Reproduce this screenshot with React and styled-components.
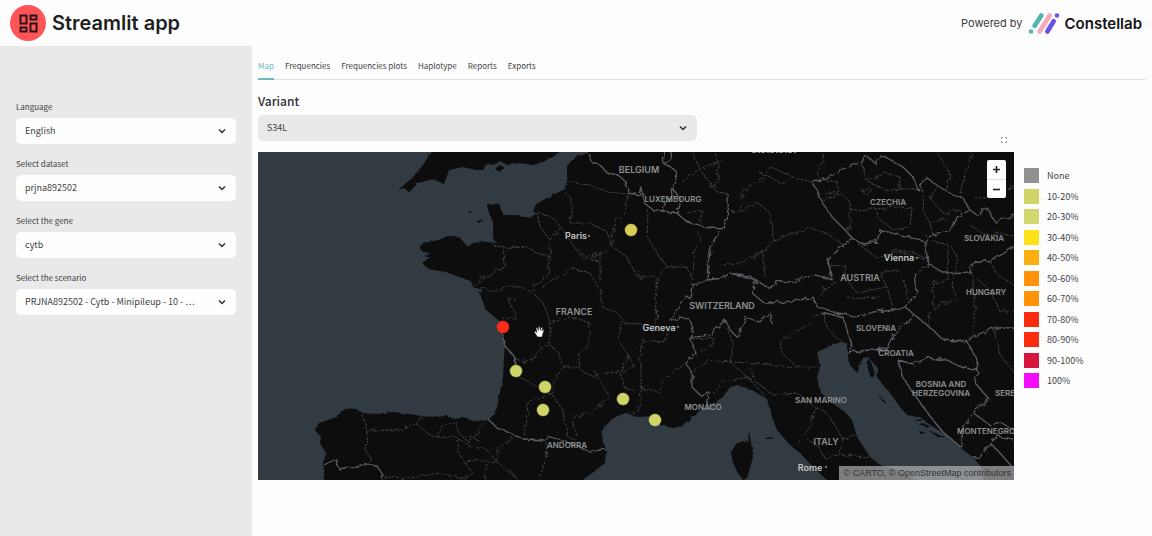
import React from "react";
import styled, { createGlobalStyle } from "styled-components";

const sidebarFields = [
  { id: "language", label: "Language", value: "English" },
  { id: "dataset", label: "Select dataset", value: "prjna892502" },
  { id: "gene", label: "Select the gene", value: "cytb" },
  {
    id: "scenario",
    label: "Select the scenario",
    value: "PRJNA892502 - Cytb - Minipileup - 10 - …",
  },
];

const tabs = [
  "Map",
  "Frequencies",
  "Frequencies plots",
  "Haplotype",
  "Reports",
  "Exports",
];

const legend = [
  { label: "None", color: "#8f918f" },
  { label: "10-20%", color: "#ced467" },
  { label: "20-30%", color: "#d0d970" },
  { label: "30-40%", color: "#ffe11a" },
  { label: "40-50%", color: "#fcb010" },
  { label: "50-60%", color: "#ff9208" },
  { label: "60-70%", color: "#ff9208" },
  { label: "70-80%", color: "#fa2c10" },
  { label: "80-90%", color: "#fa2c10" },
  { label: "90-100%", color: "#d6163f" },
  { label: "100%", color: "#f20cfb" },
];

const samples = [
  { x: 631, y: 230, color: "#d8cf55" },
  { x: 503, y: 327, color: "#fa2c1a" },
  { x: 516, y: 371, color: "#ced467" },
  { x: 545, y: 387, color: "#ced467" },
  { x: 543, y: 410, color: "#ced467" },
  { x: 623, y: 399, color: "#ced467" },
  { x: 655, y: 420, color: "#ced467" },
];

const land = [
  // continent, from the Belgian coast round to Lazio
  "M590 150 L588 153 573 158 567 167 567 182 563 190 547 198 535 205 533 212 537 213 530 218 517 215 503 215 499 204 487 205 489 213 493 222 493 238 497 243 486 242 473 243 468 247 459 237 448 236 439 240 423 243 419 248 423 252 431 253 424 256 430 258 422 263 429 269 446 272 459 277 471 281 473 287 483 290 480 293 484 307 486 310 501 322 499 331 505 343 503 377 496 413 488 420 473 421 463 417 456 419 446 416 426 417 409 414 393 412 376 414 363 413 356 409 344 408 337 417 319 423 315 430 321 437 320 443 326 453 323 463 325 482 L580 482 605 463 606 450 602 437 603 428 613 418 625 413 638 417 653 416 660 425 673 428 683 426 693 415 710 405 723 397 730 387 738 385 752 390 767 399 772 417 777 430 790 445 800 453 813 467 829 482 1016 482 1016 150Z",
  // southern England and the Isle of Wight
  "M433 150 L423 165 413 177 403 186 398 190 404 188 409 192 418 183 433 179 444 184 449 170 463 167 476 170 483 170 486 165 496 164 499 161 509 165 520 163 533 165 543 162 553 157 562 150Z",
  "M495 169 L500 165 505 168 500 172Z",
  // Channel islands
  "M477 221 L482 220 484 222 479 223Z M468 211 L471 211 471 213Z",
  // Corsica and Elba
  "M749 432 L748 440 737 443 731 452 733 463 738 473 743 480 747 478 753 457 751 442Z",
  "M765 438 L773 437 772 439 766 439Z",
];

const adriatic =
  "M817 352 L828 347 840 342 847 343 847 352 850 365 857 373 863 358 868 357 877 367 877 377 888 390 900 407 907 415 920 417 933 427 947 435 962 449 973 457 981 467 984 482 920 482 895 469 880 465 870 457 857 437 852 420 845 412 832 403 820 392 817 377 820 367Z";

const dalmatia =
  "M866 363 L871 378 874 376 873 366 869 359Z M873 371 L885 385 892 391 886 389Z M879 395 L885 402 883 402Z M914 420 L924 419 922 422Z M917 425 L927 424 930 427Z M919 431 L926 433 921 434Z M928 430 L945 437 938 437Z";

const countryBorders = [
  "M588 153 L592 163 600 165 607 173 618 175 627 183 628 193 640 195 642 188 644 203 653 210 663 211 677 213 687 222 703 227 722 229",
  "M665 150 L663 163 675 170 677 180 672 188 673 197 665 203 663 211 M672 188 L681 200 678 213",
  "M670 150 L672 159 664 164",
  "M727 193 L727 202 728 217 722 229 712 243 708 263 707 280",
  "M707 280 L693 285 692 293 680 303 673 317 671 322 680 317 690 320 693 328 690 338 696 353 686 363 692 373 692 387 700 395 710 393 707 405",
  "M707 280 L723 278 730 273 743 277 755 280 752 293 763 302",
  "M730 273 L741 275 750 276 758 284",
  "M690 338 L710 335 725 320 730 330 738 338 747 318 757 322 770 313 772 324",
  "M756 280 L768 288 777 280 790 283 815 275 832 280 828 260 843 245 852 238 847 232 832 217 822 202 813 182 822 180 840 170 862 162 865 155 875 163 880 156 887 158 903 167 913 177 918 190 927 178 947 192 963 198 970 210 957 217 952 230 928 237 925 242 900 235 880 230 877 242 863 244 852 238",
  "M970 210 L977 215 987 208 995 222 1015 215",
  "M925 242 L928 263 943 273 970 272 973 263 993 260 1014 247",
  "M928 263 L915 275 917 293 905 307 897 310 873 312 860 317 833 312 817 307 813 297 790 302 767 303 760 300",
  "M905 307 L917 317 933 330 943 340 967 342 972 337 993 328 1014 328",
  "M820 312 L843 317 847 333 853 348 848 352 870 350 888 349 895 333 913 315",
  "M898 360 L903 377 913 393 933 420 943 432 962 448 962 430 973 413 988 398 975 383 978 370 960 367 947 360 927 358 913 364 898 360",
  "M967 342 L977 360 978 370 M973 413 L990 425 1000 422 1014 430",
  "M973 457 L980 457 990 443 1000 453 1012 467 M990 443 L998 436 1014 440",
  "M489 420 L496 427 510 433 523 439 545 440 547 436 570 443 590 452 605 449",
  "M324 465 L336 459 339 469 363 465 376 465 383 475 382 480",
  "M500 326 L505 346 514 356 516 368",
];

const regionBorders = [
  "M568 182 L590 185 607 192 628 194 627 210 617 220 612 233 612 247",
  "M565 192 L572 200 570 223 590 223 607 232 612 247 600 253 587 257 575 248 563 230 553 218 537 213 540 227 550 240 560 228",
  "M648 210 L647 237 657 253 667 267 657 277 637 277 627 257 613 247 M637 270 L640 279",
  "M667 267 L687 267 693 280 M697 230 L700 240 695 250 693 273 M687 213 L702 210 700 227",
  "M510 248 L527 247 537 253 550 257 548 273 533 288 M550 240 L550 257",
  "M516 286 L532 292 547 285 573 268 590 273 600 290 602 307 617 313 623 320 618 340 628 355 622 372",
  "M600 253 L600 283 M575 248 L583 258 600 260 M657 277 L655 300 657 320",
  "M532 292 L543 303 550 323 M628 355 L634 365 622 373",
  "M493 245 L504 247 505 267 483 278 474 285 M504 247 L516 247 527 247",
  "M480 288 L496 292 506 286 516 286 M508 298 L516 317 502 320 M516 300 L508 298",
  "M510 353 L523 363 533 358 550 342 550 323 570 317 590 323 588 347 578 353 580 370 593 377 600 373",
  "M550 345 L558 352 563 367 553 383 552 393 527 402 528 417 523 435 M563 367 L578 367",
  "M517 375 L537 387 552 395 563 410 568 437 575 440",
  "M593 370 L602 383 610 398 590 413 572 418 577 437 M602 373 L620 372 625 388 638 390",
  "M672 327 L663 342 643 340 640 360 642 387 638 410 630 413 M657 310 L655 325 623 323",
  "M642 388 L660 392 662 380 673 373 686 363",
  "M693 372 L710 360 730 362 747 377 723 382 713 393 M730 362 L750 363 770 365 797 367 820 367",
  "M727 328 L733 343 730 362 M747 377 L760 385 773 395 797 393 815 407 823 410 832 420 842 438 855 435",
  "M693 340 L713 338 713 346 700 350 M753 377 L750 368 M748 378 L766 397",
  "M797 367 L782 353 780 342 810 323 820 313 M823 313 L827 327 835 337 843 342",
  "M815 407 L810 427 797 445 M842 438 L840 455 824 457 817 445 808 440 M842 455 L870 457",
  "M682 182 L698 170 713 163 723 160 M692 150 L700 170 717 192 727 193",
  "M714 150 L718 165 718 182 710 188 M740 212 L743 190 762 180 770 167 790 175",
  "M730 210 L740 213 757 202 770 213 773 240 763 253 765 277 M723 265 L743 262 767 250",
  "M760 173 L770 177 780 183 793 178 813 182 M822 153 L824 163 816 172 820 180",
  "M773 240 L810 228 827 233 843 245 M822 202 L840 193 850 202 850 227 847 232",
  "M822 180 L838 182 838 192 826 195 M862 162 L866 180 885 190 900 188 900 177 887 173 866 180",
  "M850 210 L877 209 893 207 912 208 910 227 893 230 878 218 877 209 M862 191 L868 187 873 192 866 194Z",
  "M923 190 L922 210 930 223 933 235 M937 187 L930 198 943 213 960 210 M930 223 L947 218",
  "M937 153 L950 173 947 190 M973 153 L967 167 960 193 M1014 186 L993 197 973 197 M900 188 L922 190",
  "M925 260 L900 252 877 258 857 243 M890 255 L893 250 912 252 925 258",
  "M830 266 L845 265 847 280 857 293 887 287 893 310 M840 280 L822 290 820 300 M887 287 L880 272 900 270",
  "M933 309 L933 283 948 280 947 243 M933 242 L946 244 M847 297 L860 299 880 297 M904 280 L908 300",
  "M957 300 L952 285 958 258 950 245 M933 309 L952 300 M972 273 L975 307 972 337",
  "M990 262 L998 275 1014 285 M978 280 L990 290 1000 312 1014 310 M993 328 L1000 355 1014 372",
  "M930 312 L928 325 M970 225 L985 235 1000 232 1014 237",
  "M363 415 L367 432 385 430 400 430 416 424 422 417 M367 432 L366 452 372 460 367 465",
  "M416 424 L430 435 438 437 442 426 456 422 458 432 469 443 488 420 M438 437 L456 437 470 446 485 448 497 462 516 478",
  "M384 477 L410 478 440 473 465 479 473 473 464 462 457 450 458 440 M464 462 L480 460 497 463 497 450 512 437",
  "M487 464 L485 480 M546 442 L545 462 538 480 M510 470 L518 480 M480 442 L470 436 462 438",
];

const places = [
  { x: 639, y: 173, name: "BELGIUM", size: 9 },
  { x: 673, y: 202, name: "LUXEMBOURG", size: 8 },
  { x: 888, y: 205, name: "CZECHIA", size: 8 },
  { x: 984, y: 241, name: "SLOVAKIA", size: 8 },
  { x: 860, y: 281, name: "AUSTRIA", size: 9 },
  { x: 986, y: 295, name: "HUNGARY", size: 8 },
  { x: 574, y: 315, name: "FRANCE", size: 9 },
  { x: 722, y: 309, name: "SWITZERLAND", size: 9 },
  { x: 876, y: 331, name: "SLOVENIA", size: 8 },
  { x: 896, y: 356, name: "CROATIA", size: 8 },
  { x: 941, y: 387, name: "BOSNIA AND", size: 8 },
  { x: 941, y: 396, name: "HERZEGOVINA", size: 8 },
  { x: 1005, y: 396, name: "SERE", size: 8 },
  { x: 821, y: 403, name: "SAN MARINO", size: 8 },
  { x: 703, y: 410, name: "MONACO", size: 8 },
  { x: 567, y: 448, name: "ANDORRA", size: 8 },
  { x: 826, y: 445, name: "ITALY", size: 9 },
  { x: 986, y: 434, name: "MONTENEGRO", size: 8 },
];

const cities = [
  { x: 576, y: 239, name: "Paris" },
  { x: 899, y: 261, name: "Vienna" },
  { x: 659, y: 331, name: "Geneva" },
  { x: 810, y: 471, name: "Rome" },
];

function Chevron() {
  return (
    <ChevronIcon viewBox="0 0 10 10" aria-hidden="true">
      <path d="M2 3.5 L5 6.5 L8 3.5" />
    </ChevronIcon>
  );
}

function Select({ id, value, tone }) {
  return (
    <SelectBox $tone={tone}>
      <SelectInput id={id} defaultValue={value}>
        <option>{value}</option>
      </SelectInput>
      <Chevron />
    </SelectBox>
  );
}

function EuropeMap() {
  return (
    <MapSvg
      viewBox="258 152 756 328"
      preserveAspectRatio="xMidYMid slice"
      role="img"
      aria-label="Map of the samples"
    >
      <defs>
        <filter id="coast" x="-5%" y="-5%" width="110%" height="110%">
          <feTurbulence
            type="fractalNoise"
            baseFrequency="0.16"
            numOctaves="2"
            seed="4"
          />
          <feDisplacementMap in="SourceGraphic" scale="3" />
        </filter>
        <filter id="crinkle" x="-5%" y="-5%" width="110%" height="110%">
          <feTurbulence
            type="fractalNoise"
            baseFrequency="0.16"
            numOctaves="3"
            seed="4"
          />
          <feDisplacementMap in="SourceGraphic" scale="6" />
        </filter>
      </defs>
      <g filter="url(#coast)">
        <rect x="200" y="100" width="900" height="430" fill="#303a43" />
        {land.map((d) => (
          <path key={d} d={d} fill="#090a0a" />
        ))}
        <path d={adriatic} fill="#303a43" />
        <path d={dalmatia} fill="#090a0a" />
      </g>
      <g filter="url(#crinkle)" fill="none" strokeLinejoin="round">
        <path
          d={regionBorders.join(" ")}
          stroke="#4a4b4c"
          strokeWidth="0.9"
          strokeDasharray="3 1"
        />
        <path d={countryBorders.join(" ")} stroke="#5a5d63" strokeWidth="1.3" />
      </g>
      {places.map((p) => (
        <Country key={p.name} x={p.x} y={p.y} fontSize={p.size}>
          {p.name}
        </Country>
      ))}
      {cities.map((c) => (
        <City key={c.name} x={c.x} y={c.y}>
          {c.name}
        </City>
      ))}
      <g fill="#6d6f70">
        <circle cx="589" cy="236" r="1.2" />
        <circle cx="917" cy="258" r="1.2" />
        <circle cx="678" cy="327" r="1.2" />
        <circle cx="826" cy="467" r="1.2" />
      </g>
      {/* lower edge of a label on the tile above */}
      <path d="M752 152.500H796" stroke="#85888a" strokeDasharray="4 2 2 1" />
      {samples.map((s) => (
        <circle
          key={s.x}
          cx={s.x}
          cy={s.y}
          r="6"
          fill={s.color}
          stroke={s.color}
          strokeOpacity="0.5"
        />
      ))}
      {/* grab cursor */}
      <path
        d="M537.500 337 L534.500 332.500 Q534 331 535.500 331.300 L537 332.500 L536 328.500 Q536.500 327.300 537.500 328.300 L538.300 330.500 L538.200 327 Q539 326 539.800 327 L540.200 330.300 L541 327.500 Q542 326.800 542.400 328 L542 331 L543 329.500 Q544 329.300 543.900 330.500 L542.500 335 L542 337Z"
        fill="#fff"
        stroke="#111"
        strokeWidth="0.5"
      />
    </MapSvg>
  );
}

function App() {
  return (
    <>
      <GlobalStyle />
      <Page>
        <Header>
          <Brand>
            <BrandLogo viewBox="0 0 36 36" aria-hidden="true">
              <circle cx="18" cy="18" r="18" fill="#ff5558" />
              <g fill="none" stroke="#2a1517" strokeWidth="2">
                <path d="M10.500 10.500h6v8h-6zM20.500 10.500h6v4h-6zM10.500 22.500h6v4h-6zM20.500 18.500h6v8h-6z" />
              </g>
            </BrandLogo>
            <Title>Streamlit app</Title>
          </Brand>
          <Powered>
            <span>Powered by</span>
            <ConstellabLogo viewBox="268 34 96 68" aria-hidden="true">
              <g strokeWidth="14" strokeLinecap="round">
                <path d="M308 44L288 75M277 92v.1" stroke="#52b5ae" />
                <path d="M333 44L303 92" stroke="#f6a9b8" />
                <path d="M355 44v.1M345 61L326 92" stroke="#6b51e4" />
              </g>
            </ConstellabLogo>
            <Company>Constellab</Company>
          </Powered>
        </Header>
        <Body>
          <Sidebar>
            {sidebarFields.map((f) => (
              <Field key={f.id}>
                <Label htmlFor={f.id}>{f.label}</Label>
                <Select id={f.id} value={f.value} tone="#fefefe" />
              </Field>
            ))}
          </Sidebar>
          <Main>
            <Tabs role="tablist">
              {tabs.map((t, i) => (
                <Tab key={t} role="tab" aria-selected={i === 0} $active={i === 0}>
                  {t}
                </Tab>
              ))}
            </Tabs>
            <VariantRow>
              <VariantLabel htmlFor="variant">Variant</VariantLabel>
              <Select id="variant" value="S34L" tone="#e9e9e9" />
            </VariantRow>
            <Results>
              <MapPanel>
                <EuropeMap />
                <Fullscreen aria-label="View fullscreen">
                  <svg viewBox="0 0 8 8" width="8" height="8">
                    <path
                      d="M1.500 3V1.500H3M5 1.500h1.500V3M6.500 5v1.500H5M3 6.500H1.500V5"
                      fill="none"
                      stroke="#9b9ca0"
                    />
                  </svg>
                </Fullscreen>
                <ZoomControl>
                  <ZoomButton aria-label="Zoom in">
                    <svg viewBox="0 0 9 9" width="9" height="9">
                      <path d="M4.500 1v7M1 4.500h7" stroke="#222" strokeWidth="1.600" />
                    </svg>
                  </ZoomButton>
                  <ZoomButton aria-label="Zoom out">
                    <svg viewBox="0 0 9 9" width="9" height="9">
                      <path d="M1 4.500h7" stroke="#222" strokeWidth="1.600" />
                    </svg>
                  </ZoomButton>
                </ZoomControl>
                <Attribution>
                  © <a href="#carto">CARTO</a>, ©{" "}
                  <a href="#osm">OpenStreetMap</a> contributors
                </Attribution>
              </MapPanel>
              <Legend>
                {legend.map((l) => (
                  <LegendItem key={l.label}>
                    <Swatch $color={l.color} />
                    {l.label}
                  </LegendItem>
                ))}
              </Legend>
            </Results>
          </Main>
        </Body>
      </Page>
    </>
  );
}

export default App;

const GlobalStyle = createGlobalStyle`
  * {
    box-sizing: border-box;
  }
  body {
    margin: 0;
    background: #fdfdfd;
    color: #414245;
    font-family: "Noto Sans CJK KR", "Noto Sans", sans-serif;
    font-size: 9px;
  }
  button, select {
    font: inherit;
    color: inherit;
    border: 0;
    padding: 0;
    background: none;
  }
`;

const Page = styled.div`
  min-height: 100vh;
  display: flex;
  flex-direction: column;
`;

const Header = styled.header`
  height: 46px;
  padding: 0 10px;
  display: flex;
  align-items: center;
  justify-content: space-between;
  font-family: Inter, sans-serif;
`;

const Brand = styled.div`
  display: flex;
  align-items: center;
  gap: 6px;
`;

const BrandLogo = styled.svg`
  width: 36px;
  height: 36px;
`;

const Title = styled.h1`
  margin: 0;
  font-size: 20px;
  font-weight: 600;
  color: #1d1f22;
`;

const Powered = styled.div`
  display: flex;
  align-items: center;
  gap: 5px;
  font-size: 11px;
  color: #3a3b3d;
`;

const ConstellabLogo = styled.svg`
  width: 32px;
  height: 23px;
  fill: none;
`;

const Company = styled.strong`
  font-size: 15px;
  font-weight: 600;
  color: #121315;
`;

const Body = styled.div`
  flex: 1;
  display: flex;
`;

const Sidebar = styled.aside`
  width: 252px;
  flex: none;
  padding: 54px 16px 16px;
  background: #e9e9e9;
  display: flex;
  flex-direction: column;
  gap: 13px;
`;

const Field = styled.div`
  display: flex;
  flex-direction: column;
  gap: 4px;
`;

const Label = styled.label`
  font-size: 8px;
  line-height: 14px;
`;

const SelectBox = styled.div`
  display: grid;
  align-items: center;
  height: 26px;
  border-radius: 5px;
  background: ${(props) => props.$tone};
`;

const SelectInput = styled.select`
  grid-area: 1 / 1;
  width: 100%;
  height: 26px;
  padding: 0 24px 1px 9px;
  appearance: none;
  text-overflow: ellipsis;
`;

const ChevronIcon = styled.svg`
  grid-area: 1 / 1;
  justify-self: end;
  width: 10px;
  height: 10px;
  margin-right: 9px;
  pointer-events: none;
  fill: none;
  stroke: #303134;
  stroke-width: 1.5px;
`;

const Main = styled.main`
  flex: 1;
  min-width: 0;
  padding: 6px 6px 16px;
`;

const Tabs = styled.div`
  display: flex;
  gap: 11px;
  height: 28px;
  box-shadow: inset 0 -1px #dddfe2;
`;

const Tab = styled.button`
  font-size: 8px;
  line-height: 14px;
  padding-top: 1px;
  color: ${(props) => (props.$active ? "#74b9bd" : "inherit")};
  border-bottom: 2px solid
    ${(props) => (props.$active ? "#74b9bd" : "transparent")};
`;

const VariantRow = styled.div`
  width: calc(50% - 5px);
  padding-top: 12px;
  display: flex;
  flex-direction: column;
  gap: 5px;
`;

const VariantLabel = styled.label`
  font-size: 12px;
  line-height: 18px;
  font-weight: 500;
  color: #2c2d31;
`;

const Results = styled.div`
  margin-top: 11px;
  display: grid;
  grid-template-columns: 31fr 5fr;
  gap: 10px;
  align-items: start;
`;

const MapPanel = styled.div`
  position: relative;
  height: 328px;
`;

const MapSvg = styled.svg`
  display: block;
  width: 100%;
  height: 100%;
`;

const Country = styled.text`
  font-family: Inter, sans-serif;
  font-weight: 600;
  fill: #8f9193;
  text-anchor: middle;
`;

const City = styled.text`
  font-family: Inter, sans-serif;
  font-size: 9px;
  font-weight: 600;
  fill: #c3c5c6;
  text-anchor: middle;
`;

const Fullscreen = styled.button`
  position: absolute;
  top: -16px;
  right: 6px;
  width: 8px;
  height: 8px;
  display: flex;
`;

const ZoomControl = styled.div`
  position: absolute;
  top: 8px;
  right: 8px;
  width: 19px;
  border-radius: 2px;
  background: #fff;
`;

const ZoomButton = styled.button`
  width: 100%;
  height: 19px;
  display: flex;
  align-items: center;
  justify-content: center;

  & + & {
    border-top: 1px solid #ddd;
  }
`;

const Attribution = styled.div`
  position: absolute;
  right: 0;
  bottom: 0;
  padding: 0 3px 0 4px;
  background: rgba(200, 202, 204, 0.6);
  font-family: "Liberation Sans", sans-serif;
  font-size: 9px;
  line-height: 14px;
  color: #303234;

  a {
    color: inherit;
    text-decoration: none;
  }
`;

const Legend = styled.ul`
  list-style: none;
  margin: 16px 0 0;
  padding: 0;
  height: 220px;
  display: flex;
  flex-direction: column;
  justify-content: space-between;
`;

const LegendItem = styled.li`
  display: flex;
  align-items: center;
  gap: 8px;
  line-height: 15px;
`;

const Swatch = styled.span`
  width: 15px;
  height: 15px;
  background: ${(props) => props.$color};
`;
